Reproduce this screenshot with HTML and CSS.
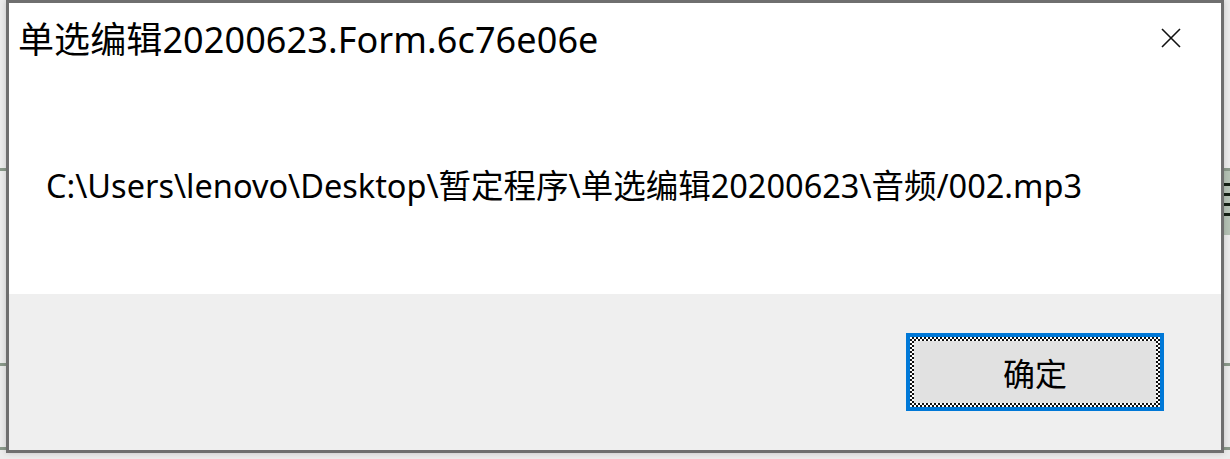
FILE: index.html
```html
<!DOCTYPE html>
<html lang="zh-CN">
<head>
    <meta charset="UTF-8">
    <meta name="viewport" content="width=device-width, initial-scale=1.0">
    <title>单选编辑20200623.Form.6c76e06e</title>
    <link rel="stylesheet" href="styles.css">
</head>
<body>
    <div class="backdrop">
        <div class="edge-note"></div>
    </div>
    <div class="dialog">
        <div class="title-bar">
            <span class="title">单选编辑20200623.Form.6c76e06e</span>
            <button class="close-btn" aria-label="关闭">
                <svg width="20" height="20" viewBox="0 0 20 20">
                    <path d="M1 1 L19 19 M19 1 L1 19" stroke="#111" stroke-width="1.6" fill="none"/>
                </svg>
            </button>
        </div>
        <div class="message">
            <p>C:\Users\lenovo\Desktop\暂定程序\单选编辑20200623\音频/002.mp3</p>
        </div>
        <div class="footer">
            <button class="ok-btn"><span class="ok-face">确定</span></button>
        </div>
    </div>
</body>
</html>
```

FILE: styles.css
```css
body {
    margin: 0;
    padding: 0;
    width: 1230px;
    height: 459px;
    overflow: hidden;
    position: relative;
    font-family: "Noto Sans", "Noto Sans CJK SC", sans-serif;
    background-color: #ececec;
}
.backdrop {
    position: absolute;
    inset: 0;
    background-image:
        linear-gradient(to bottom, transparent 168px, #8a998a 168px, #8a998a 171px, transparent 171px),
        linear-gradient(to bottom, transparent 363px, #8a998a 363px, #8a998a 366px, transparent 366px),
        linear-gradient(to bottom, transparent 447px, #8a998a 447px, #8a998a 450px, transparent 450px);
}
.edge-note {
    position: absolute;
    left: 1224px;
    top: 171px;
    width: 6px;
    height: 64px;
    background-color: #b5c2b5;
    background-image:
        linear-gradient(to bottom, transparent 12px, #142014 12px, #142014 15px, transparent 15px,
            transparent 22px, #142014 22px, #142014 25px, transparent 25px,
            transparent 32px, #142014 32px, #142014 35px, transparent 35px,
            transparent 42px, #142014 42px, #142014 45px, transparent 45px);
}
.dialog {
    position: relative;
    margin-left: 6px;
    width: 1212px;
    height: 447px;
    border: 3px solid #6f6f6f;
    background-color: #fff;
    display: flex;
    flex-direction: column;
    box-shadow: 0 0 6px rgba(0, 0, 0, 0.18);
}
.title-bar {
    height: 72px;
    display: flex;
    align-items: center;
    justify-content: space-between;
    padding: 0 0 4px 9px;
    box-sizing: border-box;
}
.title {
    font-size: 36px;
    color: #000;
    letter-spacing: 0.1px;
}
.close-btn {
    width: 100px;
    height: 72px;
    margin-top: 2px;
    border: none;
    background: none;
    padding: 0;
    display: flex;
    align-items: center;
    justify-content: center;
}
.message {
    height: 219px;
    padding-left: 37px;
    box-sizing: border-box;
}
.message p {
    margin: 0;
    padding-top: 89px;
    font-size: 32.5px;
    line-height: 44px;
    color: #000;
}
.footer {
    flex: 1;
    background-color: #efefef;
    display: flex;
    justify-content: flex-end;
    align-items: flex-start;
    padding: 39px 57px 0 0;
}
.ok-btn {
    width: 258px;
    height: 78px;
    padding: 4px;
    border: 4px solid #0078d7;
    box-sizing: border-box;
    background: repeating-conic-gradient(#111 0 25%, #fff 0 50%) 0 0 / 4px 4px;
    display: flex;
}
.ok-face {
    flex: 1;
    margin: 0;
    background-color: #e1e1e1;
    display: flex;
    align-items: center;
    justify-content: center;
    font-size: 32px;
    color: #000;
    font-family: "Noto Sans CJK SC", sans-serif;
}
```
